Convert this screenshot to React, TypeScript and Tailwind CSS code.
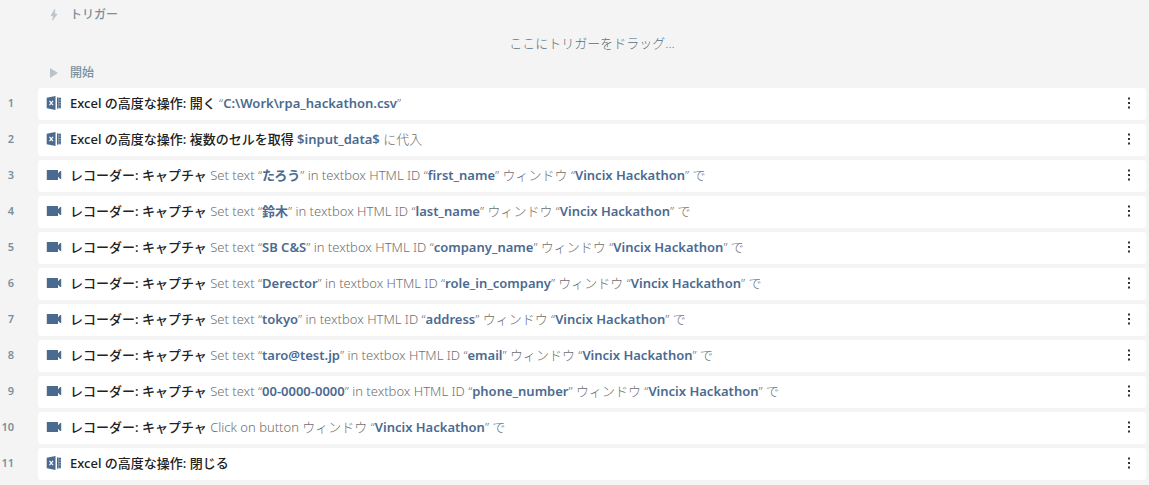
import { Fragment } from 'react';

type Step = {
  icon: 'excel' | 'recorder';
  title: string;
  // Segments wrapped in ** are values, the rest is plain description.
  detail: string;
};

const fieldStep = (value: string, field: string): Step => ({
  icon: 'recorder',
  title: 'レコーダー: キャプチャ',
  detail: `Set text “**${value}**” in textbox HTML ID “**${field}**” ウィンドウ “**Vincix Hackathon**” で`,
});

const steps: Step[] = [
  { icon: 'excel', title: 'Excel の高度な操作: 開く', detail: '“**C:\\Work\\rpa_hackathon.csv**”' },
  { icon: 'excel', title: 'Excel の高度な操作: 複数のセルを取得', detail: '**$input_data$** に代入' },
  fieldStep('たろう', 'first_name'),
  fieldStep('鈴木', 'last_name'),
  fieldStep('SB C&S', 'company_name'),
  fieldStep('Derector', 'role_in_company'),
  fieldStep('tokyo', 'address'),
  fieldStep('taro@test.jp', 'email'),
  fieldStep('00-0000-0000', 'phone_number'),
  {
    icon: 'recorder',
    title: 'レコーダー: キャプチャ',
    detail: 'Click on button ウィンドウ “**Vincix Hackathon**” で',
  },
  { icon: 'excel', title: 'Excel の高度な操作: 閉じる', detail: '' },
];

function ExcelIcon() {
  return (
    <svg viewBox="0 0 16 16" className="h-4 w-4 shrink-0" aria-hidden="true">
      <path d="M.7 2.800 9.500 1v14L.7 13.200Z" fill="#4b6a8f" />
      <path d="m3.500 5.800 3.500 4.400M7 5.800l-3.500 4.400" stroke="#fff" strokeWidth="1.2" />
      <path d="M11 2.500h4v11h-4z" fill="#93a5bb" />
      <path d="M11 2.500h1v11h-1zM12.500 3H15v1.500h-2.500zM12.500 5.500H15V7h-2.500zM12.500 8H15v1.500h-2.500zM12.500 10.500H15V12.500h-2.500z" fill="#4b6a8f" />
    </svg>
  );
}

function RecorderIcon() {
  return (
    <svg viewBox="0 0 16 16" className="h-4 w-4 shrink-0" aria-hidden="true">
      <path d="M.8 3H12v3.200L14.200 4h1v8h-1L12 9.800V13H.8Z" fill="#4b6a8f" />
    </svg>
  );
}

function StepDetail({ text }: { text: string }) {
  return (
    <span className="font-light text-[#6e6e6e]">
      {text.split('**').map((part, i) =>
        i % 2 === 1 ? (
          <strong key={i} className="font-semibold text-[#4b6a8f]">{part}</strong>
        ) : (
          <Fragment key={i}>{part}</Fragment>
        )
      )}
    </span>
  );
}

export default function App() {
  return (
    <main className="min-h-screen bg-[#f4f4f4] pr-[3px] pb-1 font-['Noto_Sans','Noto_Sans_CJK_JP',sans-serif] text-[13px] leading-5">
      <h2 className="flex h-7 items-center gap-2 pt-0.5 pl-[46px] text-xs font-medium text-[#78909c]">
        <svg viewBox="0 0 16 16" className="h-4 w-4" aria-hidden="true">
          <path d="M8.800 2 4.800 8.800h2.500L6.500 13.500l4.700-6.500H8.800Z" fill="#b8c4ca" stroke="#b8c4ca" strokeWidth=".5" />
        </svg>
        トリガー
      </h2>
      <p className="flex h-[30px] items-center justify-center pl-[38px] font-light text-[#546e7a]">
        ここにトリガーをドラッグ...
      </p>
      <h2 className="flex h-7 items-center gap-2 pt-0.5 pl-[46px] text-xs font-medium text-[#78909c]">
        <svg viewBox="0 0 16 16" className="h-4 w-4" aria-hidden="true">
          <path d="M4 3v10l8-5Z" fill="#b8c4ca" />
        </svg>
        開始
      </h2>

      <ol className="mt-0.5 flex flex-col gap-1">
        {steps.map((step, i) => (
          <li key={i} className="flex items-center gap-6">
            <span className="flex w-3.5 shrink-0 justify-end pb-0.5 text-[11px] font-semibold text-[#78909c]">
              {i + 1}
            </span>
            <div className="flex h-8 min-w-0 flex-1 items-center gap-2 rounded-[3px] bg-white pr-[9px] pb-0.5 pl-2">
              {step.icon === 'excel' ? <ExcelIcon /> : <RecorderIcon />}
              <p className="min-w-0 flex-1 truncate">
                <span className="font-medium text-[#212121]">{step.title}</span>{' '}
                <StepDetail text={step.detail} />
              </p>
              <button type="button" aria-label="メニュー" className="flex h-6 w-4 items-center justify-center">
                <svg viewBox="0 0 4 14" className="h-3.5 w-1" fill="#333" aria-hidden="true">
                  <path d="M1 1.500h2v2H1zM1 6h2v2H1zM1 10.500h2v2H1z" />
                </svg>
              </button>
            </div>
          </li>
        ))}
      </ol>
    </main>
  );
}
